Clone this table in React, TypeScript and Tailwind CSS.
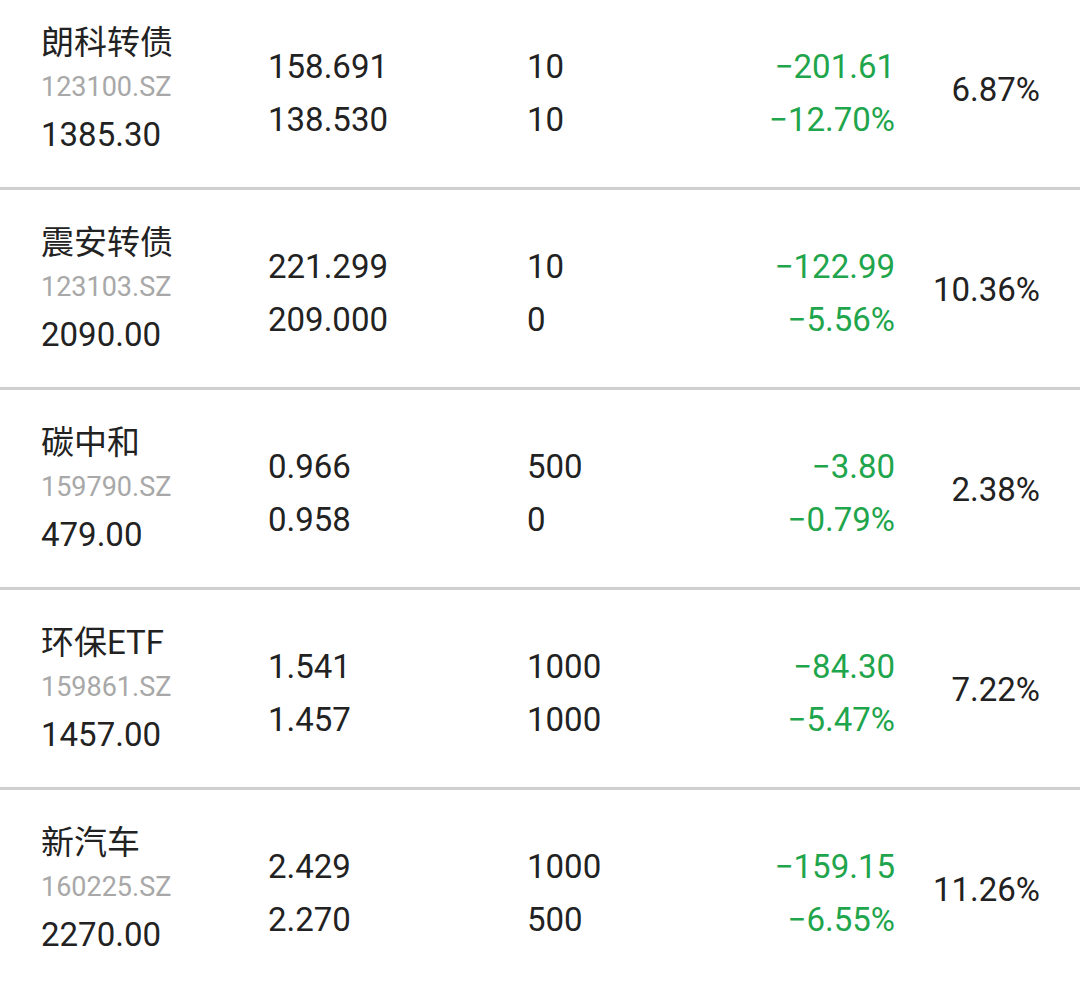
import React from 'react';

interface Holding {
  name: string;
  code: string;
  value: string;
  cost: string;
  price: string;
  qty: string;
  avail: string;
  pnl: string;
  pnlPct: string;
  weight: string;
}

const holdings: Holding[] = [
  { name: '朗科转债', code: '123100.SZ', value: '1385.30', cost: '158.691', price: '138.530', qty: '10', avail: '10', pnl: '−201.61', pnlPct: '−12.70%', weight: '6.87%' },
  { name: '震安转债', code: '123103.SZ', value: '2090.00', cost: '221.299', price: '209.000', qty: '10', avail: '0', pnl: '−122.99', pnlPct: '−5.56%', weight: '10.36%' },
  { name: '碳中和', code: '159790.SZ', value: '479.00', cost: '0.966', price: '0.958', qty: '500', avail: '0', pnl: '−3.80', pnlPct: '−0.79%', weight: '2.38%' },
  { name: '环保ETF', code: '159861.SZ', value: '1457.00', cost: '1.541', price: '1.457', qty: '1000', avail: '1000', pnl: '−84.30', pnlPct: '−5.47%', weight: '7.22%' },
  { name: '新汽车', code: '160225.SZ', value: '2270.00', cost: '2.429', price: '2.270', qty: '1000', avail: '500', pnl: '−159.15', pnlPct: '−6.55%', weight: '11.26%' },
];

const HoldingRow: React.FC<{ h: Holding }> = ({ h }) => (
  <div className="flex items-center h-[200px] border-b-[3px] border-[#cfcfcf] pl-[41px] pr-[40px]">
    {/* name / code / market value */}
    <div className="w-[227px] flex flex-col pt-1">
      <span className="text-[33px] leading-[44px] text-[#222]">{h.name}</span>
      <span className="text-[27px] leading-[44px] text-[#a8a8a8]">{h.code}</span>
      <span className="text-[33px] leading-[52px] text-[#222]">{h.value}</span>
    </div>
    {/* cost / price */}
    <div className="w-[259px] flex flex-col pt-2 text-[33px] leading-[53px] text-[#222]">
      <span>{h.cost}</span>
      <span>{h.price}</span>
    </div>
    {/* quantity / available */}
    <div className="flex-1 flex flex-col pt-2 text-[33px] leading-[53px] text-[#222]">
      <span>{h.qty}</span>
      <span>{h.avail}</span>
    </div>
    {/* profit / loss */}
    <div className="flex flex-col items-end pt-2 text-[33px] leading-[53px] text-[#1fa54c]">
      <span>{h.pnl}</span>
      <span>{h.pnlPct}</span>
    </div>
    {/* position weight */}
    <div className="w-[145px] text-right text-[33px] text-[#222] pt-[3px]">{h.weight}</div>
  </div>
);

export default function App() {
  return (
    <div
      className="w-[1080px] h-[983px] overflow-hidden bg-white"
      style={{ fontFamily: "Roboto, 'Noto Sans CJK SC', sans-serif" }}
    >
      <div className="-mt-[10px]">
        {holdings.map((h) => (
          <HoldingRow key={h.code} h={h} />
        ))}
      </div>
    </div>
  );
}
